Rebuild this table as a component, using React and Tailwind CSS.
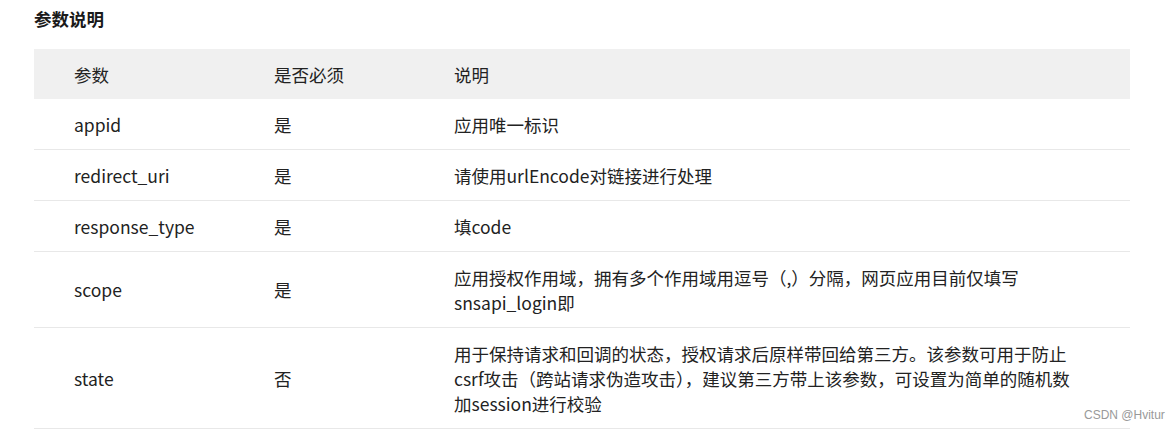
import React from 'react';

const rows = [
  { name: 'appid', req: '是', desc: ['应用唯一标识'] },
  { name: 'redirect_uri', req: '是', desc: ['请使用urlEncode对链接进行处理'] },
  { name: 'response_type', req: '是', desc: ['填code'] },
  {
    name: 'scope',
    req: '是',
    desc: ['应用授权作用域，拥有多个作用域用逗号（,）分隔，网页应用目前仅填写', 'snsapi_login即'],
  },
  {
    name: 'state',
    req: '否',
    desc: [
      '用于保持请求和回调的状态，授权请求后原样带回给第三方。该参数可用于防止',
      'csrf攻击（跨站请求伪造攻击），建议第三方带上该参数，可设置为简单的随机数',
      '加session进行校验',
    ],
  },
];

const Cell = ({ className = '', children }) => (
  <div className={`flex items-center py-[12.5px] ${className}`}>{children}</div>
);

export default function App() {
  return (
    <div
      className="relative w-[1173px] h-[431px] bg-white text-[#222] overflow-hidden"
      style={{ fontFamily: '"Noto Sans CJK SC", "Noto Sans", sans-serif' }}
    >
      <div className="pl-[34px] pr-[43px]">
        <h3 className="pt-[6px] h-[49px] text-[17.5px] leading-[25px] font-bold text-[#1a1a1a]">参数说明</h3>
        <div className="text-[17.5px] leading-[25px]">
          <div className="grid grid-cols-[240px_180px_1fr] bg-[#f0f0f0] h-[50px] items-center">
            <div className="pl-[40px]">参数</div>
            <div>是否必须</div>
            <div>说明</div>
          </div>
          {rows.map((r) => (
            <div key={r.name} className="grid grid-cols-[240px_180px_1fr] border-b border-[#e8e8e8]">
              <Cell className="pl-[40px]">{r.name}</Cell>
              <Cell>{r.req}</Cell>
              <Cell className="flex-col items-start justify-center whitespace-nowrap">
                {r.desc.map((line) => (
                  <span key={line}>{line}</span>
                ))}
              </Cell>
            </div>
          ))}
        </div>
      </div>
      <div
        className="absolute left-[1084px] top-[407px] text-[12px] leading-[16px] text-[#999]"
        style={{ fontFamily: '"Liberation Sans", sans-serif' }}
      >
        CSDN @Hvitur
      </div>
    </div>
  );
}
